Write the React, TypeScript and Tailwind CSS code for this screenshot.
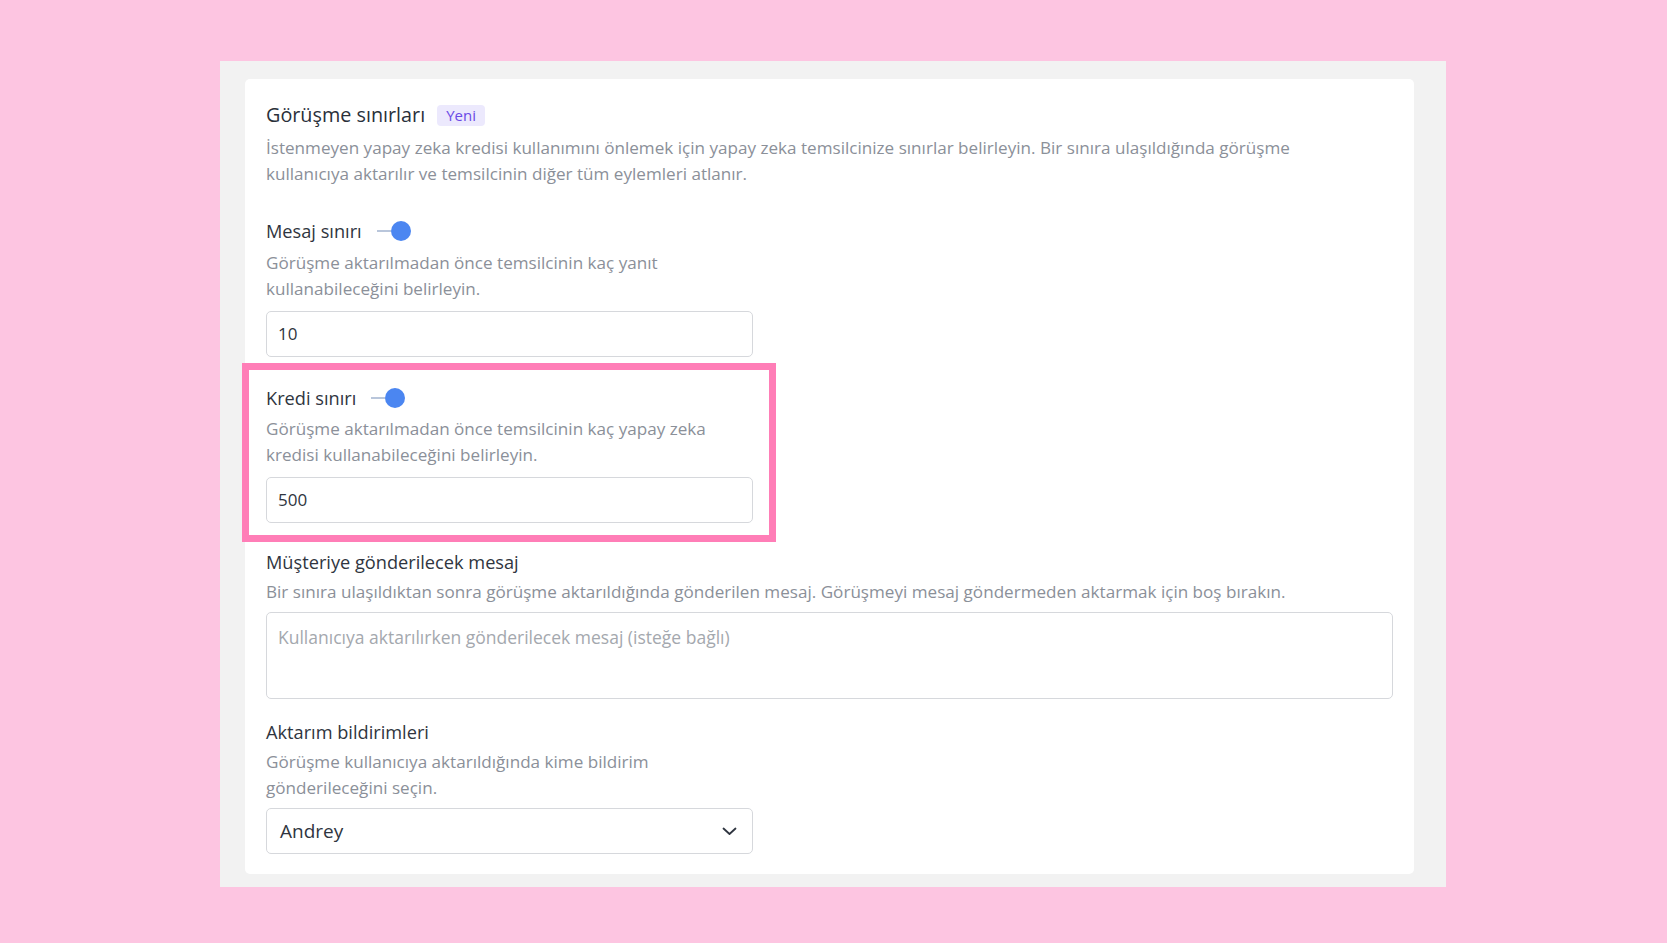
import React from "react";

const font = { fontFamily: "'Open Sans', 'Liberation Sans', sans-serif" };

const Toggle = () => (
  <span className="ml-[15px] inline-flex items-center">
    <span className="h-[2px] w-[14px] bg-[#b9c6db]" />
    <span className="h-[20px] w-[20px] rounded-full bg-[#4b86f1]" />
  </span>
);

const Label = ({ children, toggle }: { children: React.ReactNode; toggle?: boolean }) => (
  <div className="flex items-center text-[18.2px] leading-[26px] text-[#2f3540]">
    {children}
    {toggle && <Toggle />}
  </div>
);

const Hint = ({ children, className = "" }: { children: React.ReactNode; className?: string }) => (
  <p className={`text-[17.1px] leading-[26px] text-[#8b9099] ${className}`}>{children}</p>
);

const NumberInput = ({ value }: { value: string }) => (
  <div className="flex h-[46px] w-[487px] items-center rounded-[5px] border border-[#d6d8dc] bg-white px-[11px] text-[17px] text-[#2f3540]">
    {value}
  </div>
);

export default function App() {
  return (
    <div className="min-h-[943px] w-full bg-[#fdc5e1] pl-[220px] pt-[61px]" style={font}>
      <div className="w-[1226px] bg-[#f2f2f2] pl-[25px] pr-[32px] pt-[18px] pb-[13px]">
        <div className="rounded-[5px] bg-white px-[21px] pt-[22px] pb-[20px]">
          <div className="flex items-center">
            <h2 className="text-[19.8px] leading-[28px] text-[#2a303a]">Görüşme sınırları</h2>
            <span className="ml-[12px] rounded-[4px] bg-[#ece9fd] px-[9px] text-[15px] font-medium leading-[21px] text-[#6b4ae6]">
              Yeni
            </span>
          </div>
          <Hint className="mt-[6px] max-w-[1060px] leading-[25px]">
            İstenmeyen yapay zeka kredisi kullanımını önlemek için yapay zeka temsilcinize sınırlar belirleyin. Bir sınıra
            ulaşıldığında görüşme kullanıcıya aktarılır ve temsilcinin diğer tüm eylemleri atlanır.
          </Hint>

          <div className="mt-[31px]">
            <Label toggle>Mesaj sınırı</Label>
            <Hint className="mt-[6px] w-[487px]">
              Görüşme aktarılmadan önce temsilcinin kaç yanıt kullanabileceğini belirleyin.
            </Hint>
            <div className="mt-[9px]">
              <NumberInput value="10" />
            </div>
          </div>

          {/* highlighted section */}
          <div className="mt-[6px] -ml-[24px] w-[534px] border-[7px] border-[#ff7eb7] pl-[17px] pr-[16px] pt-[15px] pb-[12px]">
            <Label toggle>Kredi sınırı</Label>
            <Hint className="mt-[5px] w-[487px]">
              Görüşme aktarılmadan önce temsilcinin kaç yapay zeka kredisi kullanabileceğini belirleyin.
            </Hint>
            <div className="mt-[9px]">
              <NumberInput value="500" />
            </div>
          </div>

          <div className="mt-[7px]">
            <Label>Müşteriye gönderilecek mesaj</Label>
            <Hint className="mt-[4px]">
              Bir sınıra ulaşıldıktan sonra görüşme aktarıldığında gönderilen mesaj. Görüşmeyi mesaj göndermeden aktarmak için
              boş bırakın.
            </Hint>
            <div className="mt-[7px] h-[87px] w-full rounded-[5px] border border-[#d6d8dc] px-[11px] pt-[11px] text-[17.5px] text-[#a4a8ae]">
              Kullanıcıya aktarılırken gönderilecek mesaj (isteğe bağlı)
            </div>
          </div>

          <div className="mt-[20px]">
            <Label>Aktarım bildirimleri</Label>
            <Hint className="mt-[4px] w-[487px]">Görüşme kullanıcıya aktarıldığında kime bildirim gönderileceğini seçin.</Hint>
            <div className="mt-[7px] flex h-[46px] w-[487px] items-center justify-between rounded-[5px] border border-[#d6d8dc] pl-[13px] pr-[15px] text-[19px] text-[#2f3540]">
              <span>Andrey</span>
              <svg width="15" height="9" viewBox="0 0 15 9" fill="none">
                <path d="M1.5 1.5 L7.5 7 L13.5 1.5" stroke="#2f3540" strokeWidth="1.8" strokeLinecap="round" strokeLinejoin="round" />
              </svg>
            </div>
          </div>
        </div>
      </div>
    </div>
  );
}
